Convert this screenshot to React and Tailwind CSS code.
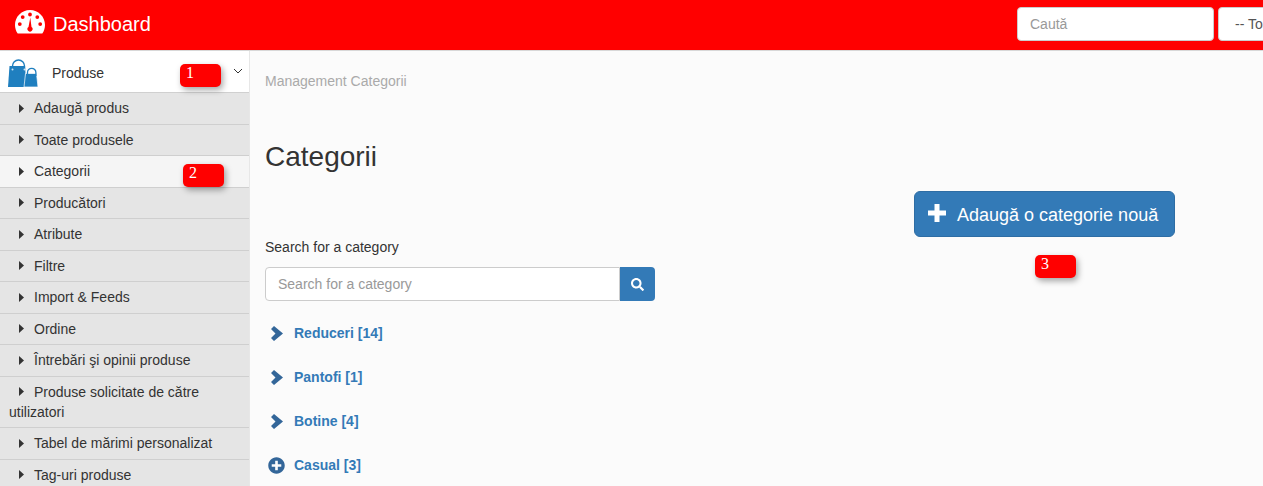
import React from 'react';
import { FaSearch, FaPlusCircle } from 'react-icons/fa';

const menu = [
  'Adaugă produs',
  'Toate produsele',
  'Categorii',
  'Producători',
  'Atribute',
  'Filtre',
  'Import & Feeds',
  'Ordine',
  'Întrebări şi opinii produse',
  'Produse solicitate de către utilizatori',
  'Tabel de mărimi personalizat',
  'Tag-uri produse',
];

const tree = [
  { name: 'Reduceri [14]', icon: 'chevron' },
  { name: 'Pantofi [1]', icon: 'chevron' },
  { name: 'Botine [4]', icon: 'chevron' },
  { name: 'Casual [3]', icon: 'plus' },
];

const Badge = ({ children, className }) => (
  <span className={`absolute z-10 h-[23px] w-[41px] rounded-[5px] bg-[#ff0000] pl-[6px] font-['Liberation_Serif',serif] text-[16px] leading-[18px] text-white shadow-[2px_3px_6px_rgba(0,0,0,0.35)] ${className}`}>
    {children}
  </span>
);

const Gauge = () => (
  <svg width="30" height="24" viewBox="0 0 30 24" className="mb-[6px] shrink-0">
    <path
      fillRule="evenodd"
      fill="#fff"
      d="M15 0C6.7 0 0 6.7 0 15c0 3.2 1 6.2 2.7 8.6h24.6C29 21.200 30 18.200 30 15 30 6.700 23.300 0 15 0zM15 2.600a1.900 1.900 0 1 1 0 3.800 1.900 1.900 0 0 1 0-3.800zM7.700 5.200a1.900 1.900 0 1 1 0 3.800 1.900 1.900 0 0 1 0-3.800zM22.300 5.200a1.900 1.900 0 1 1 0 3.800 1.900 1.900 0 0 1 0-3.800zM4.800 12.200a1.900 1.900 0 1 1 0 3.800 1.900 1.900 0 0 1 0-3.800zM25.200 12.200a1.900 1.900 0 1 1 0 3.800 1.900 1.900 0 0 1 0-3.800zM15.300 7.500l1.200 9.600a2.500 2.500 0 1 1-3 0z"
    />
  </svg>
);

const Bags = () => (
  <svg width="32" height="29" viewBox="0 0 32 29" className="mt-[3px] shrink-0">
    <path d="M2.500 7h15.500l1.500 21H1z" fill="#1f7fbf" />
    <path d="M5.500 10V7a6 6 0 0 1 12 0v3" fill="none" stroke="#1f7fbf" strokeWidth="1.400" />
    <circle cx="5.500" cy="10.500" r="1" fill="#cfe4f2" />
    <circle cx="17.500" cy="10.500" r="1" fill="#cfe4f2" />
    <path d="M18.500 14.500h11l1.500 13.500H17z" fill="#1f7fbf" stroke="#fff" strokeWidth="0.700" />
    <path d="M20.500 17v-3.500a4.200 4.200 0 0 1 8.400 0V17" fill="none" stroke="#1f7fbf" strokeWidth="1.300" />
  </svg>
);

const Caret = () => (
  <svg width="5" height="9" viewBox="0 0 5 9" className="mr-[10px] ml-[10px] inline-block align-[0.5px]">
    <path d="M0 0l5 4.500L0 9z" fill="#333" />
  </svg>
);

const App = () => (
  <div className="relative h-[486px] w-[1263px] overflow-hidden bg-[#fbfbfb] font-['Liberation_Sans',sans-serif] text-[14px] leading-[20px] text-[#333]">
    <header className="flex h-[51px] items-start border-b border-[#d8d8d8] bg-[#ff0000]">
      <div className="flex h-[50px] w-[1017px] shrink-0 items-center gap-2 pl-[15px] text-[20px] text-white">
        <Gauge />
        <span className="mb-[2px]">Dashboard</span>
      </div>
      <input
        placeholder="Caută"
        defaultValue=""
        className="mt-[7px] h-[34px] w-[197px] shrink-0 rounded-[4px] border border-[#ccc] bg-white px-3 text-[14px] text-[#555] placeholder:text-[#999]"
      />
      <div className="mt-[7px] ml-1 flex h-[34px] w-[200px] shrink-0 items-center rounded-[4px] border border-[#ccc] bg-white pl-4 text-[#555]">
        -- Toate categoriile
      </div>
    </header>

    <div className="flex h-[435px]">
      <aside className="w-[250px] shrink-0 overflow-hidden border-r border-[#e7e7e7] bg-white">
        <div className="relative flex h-[42px] items-center border-b border-[#d0d0d0] pl-[7px]">
          <Bags />
          <span className="mt-[2px] ml-[13px] text-[#333]">Produse</span>
          <Badge className="top-[13px] left-[180px]">1</Badge>
          <svg width="10" height="7" viewBox="0 0 10 7" className="absolute top-[17px] left-[233px]">
            <path d="M1 1l4 4 4-4" fill="none" stroke="#333" strokeWidth="1" />
          </svg>
        </div>
        {menu.map((label) => (
          <div
            key={label}
            className={`relative border-b border-[#cfcfcf] py-[5.25px] pl-[9px] ${label === 'Categorii' ? 'bg-[#f5f5f5]' : 'bg-[#e5e5e5]'}`}
          >
            <Caret />
            {label}
            {label === 'Categorii' && <Badge className="top-[8px] left-[183px]">2</Badge>}
          </div>
        ))}
      </aside>

      <main className="flex-1 px-[15px]">
        <p className="mt-[20px] text-[#aaa]">Management Categorii</p>
        <h2 className="mt-[50px] text-[28px] leading-[31px] font-normal">Categorii</h2>
        <div className="relative mt-[19px] ml-[649px] w-[261px]">
          <button className="flex h-[46px] w-full items-center gap-[11px] rounded-[6px] border border-[#2e6da4] bg-[#337ab7] pl-[13px] text-[18px] text-white">
            <svg width="18" height="18" viewBox="0 0 18 18" className="mb-[2px] shrink-0">
              <path d="M6.500 0h5v6.500H18v5h-6.500V18h-5v-6.500H0v-5h6.500z" fill="#fff" />
            </svg>
            <span className="pt-[2px]">Adaugă o categorie nouă</span>
          </button>
          <Badge className="top-[64px] left-[121px]">3</Badge>
        </div>
        <label className="block">Search for a category</label>
        <div className="mt-[10px] flex h-[34px] w-[390px]">
          <input
            placeholder="Search for a category"
            className="h-full w-[355px] rounded-l-[4px] border border-[#ccc] bg-white px-3 text-[14px] placeholder:text-[#999]"
          />
          <button className="flex w-[35px] items-center justify-center rounded-r-[4px] bg-[#337ab7] text-white">
            <FaSearch size={13} />
          </button>
        </div>
        <ul className="mt-[10px]">
          {tree.map((item) => (
            <li key={item.name} className="flex h-[44px] items-center font-bold text-[#337ab7]">
              <span className="flex w-[29px] text-[#336699]">
                {item.icon === 'chevron' ? (
                  <svg width="12" height="15" viewBox="0 0 12 15" className="ml-[6px]">
                    <path d="M3 0L12 7.500 3 15 0 12 4.500 7.500 0 3z" fill="#336699" />
                  </svg>
                ) : (
                  <FaPlusCircle size={17} className="ml-[3px]" />
                )}
              </span>
              {item.name}
            </li>
          ))}
        </ul>
      </main>
    </div>
  </div>
);

export default App;
